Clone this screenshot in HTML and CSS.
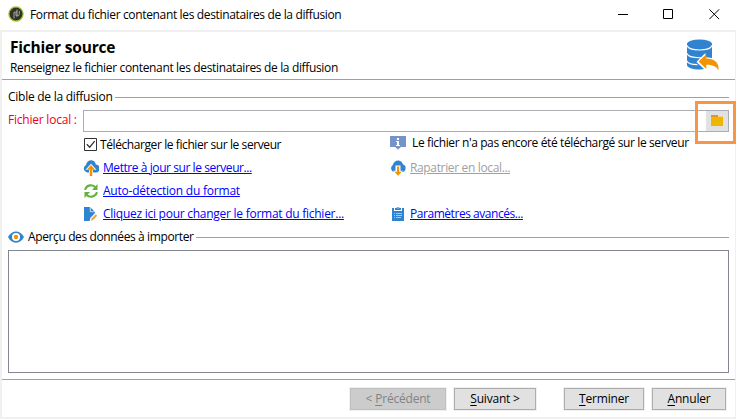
FILE: index.html
```html
<!DOCTYPE html>
<html lang="fr">
<head>
<meta charset="utf-8">
<title>Format du fichier</title>
<link rel="stylesheet" href="styles.css">
</head>
<body>
<div class="window">
  <header class="titlebar">
    <svg class="app-icon" width="16" height="16" viewBox="0 0 16 16"><circle cx="8" cy="8" r="7.100" fill="#30332a" stroke="#a5c32b" stroke-width="1.200"/><path d="M9 10.500V3.500M9 9.800H8V5.800h1M6 12.500V6.200h1.500M9 9.800c1.600 0 2.300-.6 2.300-2.200V5" fill="none" stroke="#a6a89c" stroke-width="1"/></svg>
    <span class="title">Format du fichier contenant les destinataires de la diffusion</span>
    <div class="controls">
      <svg width="11" height="11" viewBox="0 0 11 11"><path d="M1 5.500h10"/></svg>
      <svg width="11" height="11" viewBox="0 0 11 11"><path d="M.5.5h9v9h-9z"/></svg>
      <svg width="11" height="11" viewBox="0 0 11 11"><path d="M.4.4l9.700 9.700M10.100.4L.4 10.100"/></svg>
    </div>
  </header>
  <main class="client">
    <section class="heading">
      <div>
        <h1>Fichier source</h1>
        <p class="subtitle">Renseignez le fichier contenant les destinataires de la diffusion</p>
      </div>
      <svg class="db-icon" width="34" height="34" viewBox="0 0 34 34">
        <path d="M1 5v21c0 2.600 5.500 4.500 12.500 4.500 2 0 3.500-.1 4.500-.4L10.500 23l8-8v3l7.500 1V5z" fill="#3083d0"/>
        <ellipse cx="13.500" cy="5" rx="12.500" ry="4.500" fill="#3083d0"/>
        <path d="M1 6.500c1 3 6 4.500 12.500 4.500S25 9.500 26 6.500M1 14.500c1 3 6 4.200 12.500 4.200l3-.1M1 22c1 2.700 5.500 3.600 10.500 3.600" fill="none" stroke="#fff" stroke-width="1.100"/>
        <path d="M11 22.500l8.500-8.500v5c8 0 13 3.500 14 12l-14-3.500v2.500z" fill="#fff"/>
        <path d="M12.500 22.600l7.800-7.300v4.300c8 .3 12.700 3.600 12.400 11.700-2.400-4.200-6.300-5.500-12.400-5.600v4.300z" fill="#f29400"/>
      </svg>
    </section>
    <div class="group group-target"><span class="t-target">Cible de la diffusion</span></div>
    <div class="file-row">
      <label class="file-label" for="file">Fichier local :</label>
      <div class="file-field">
        <input id="file" type="text">
        <div class="browse">
          <svg width="12" height="11" viewBox="0 0 12 11"><path d="M0 0h7v2H0z" fill="#df942e"/><path d="M7 1h5v2H7z" fill="#f4cf8a"/><path d="M0 2h12v9H0z" fill="#efb600"/></svg>
          <div class="highlight"></div>
        </div>
      </div>
    </div>
    <div class="options">
      <div class="cell">
        <svg class="ic" width="16" height="16" viewBox="0 0 16 16"><path d="M1.500 1.500h12v12h-12z" fill="#fff" stroke="#333"/><path d="M3.800 7.300l2.900 2.900 5-6" fill="none" stroke="#333" stroke-width="1.300"/></svg>
        <span class="t-check">Télécharger le fichier sur le serveur</span>
      </div>
      <div class="cell info">
        <svg class="ic" width="16" height="16" viewBox="0 0 16 16"><path d="M0 1h16v11h-5l-3 2.500L5 12H0z" fill="#7694c5"/><path d="M7 3h2v2H7zM6 6h3v4h1v1H6v-1h1V7H6z" fill="#fff"/></svg>
        <span class="t-info">Le fichier n'a pas encore été téléchargé sur le serveur</span>
      </div>
      <div class="cell">
        <svg class="ic" width="16" height="16" viewBox="0 0 16 16"><path d="M4 12.500A4 4 0 0 1 3 5C3.500 1.800 6 0 8.500.2c2.500.2 4 2 4.300 4.200A4 4 0 0 1 12 12.500z" fill="#3083d0"/><path d="M8 3.800l5.500 6H10V16H6V9.800H2.500z" fill="#fff"/><path d="M8 5l4.200 4.700H9.300V16H6.700V9.700H3.800z" fill="#f29400"/></svg>
        <a class="t-update">Mettre à jour sur le serveur...</a>
      </div>
      <div class="cell">
        <svg class="ic" width="16" height="16" viewBox="0 0 16 16"><path d="M4 12A4 4 0 0 1 3 4.700C3.500 1.800 6 .2 8.500.4c2.500.2 4 1.800 4.300 3.800A4 4 0 0 1 12 12z" fill="#3083d0"/><path d="M5.500 5.500h5v5.200H13L8 16l-5-5.300h2.500z" fill="#fff"/><path d="M7 6.500h2.200v5.200h2.600L8.100 15.800 4.400 11.700H7z" fill="#f29400"/></svg>
        <a class="t-local disabled">Rapatrier en local...</a>
      </div>
      <div class="cell">
        <svg class="ic" width="16" height="16" viewBox="0 0 16 16"><path d="M2 6.800C3.800 1.300 10 1.200 12.500 4.400M14 9.200c-1.800 5.500-8 5.600-10.500 2.400" fill="none" stroke="#62b33a" stroke-width="2.100"/><path d="M14.500 1v6H9zM1.500 15V9H7z" fill="#62b33a"/></svg>
        <a class="t-auto">Auto-détection du format</a>
      </div>
      <div class="cell"></div>
      <div class="cell">
        <svg class="ic" width="16" height="16" viewBox="0 0 16 16"><path d="M1 1h6l5 5v2l-5 7H1z" fill="#3083d0"/><path d="M7.300 1v4.700H12" fill="none" stroke="#fff" stroke-width=".7"/><path d="M6.500 15.500l.8-3.500L12.500 6.500l2.800 2.800-5.300 5.400z" fill="#fff"/><path d="M8 14.700l.6-2.300 4-4.200 1.600 1.600-4.100 4.300z" fill="#f4a33a"/></svg>
        <a class="t-click">Cliquez ici pour changer le format du fichier...</a>
      </div>
      <div class="cell">
        <svg class="ic" width="16" height="16" viewBox="0 0 16 16"><path d="M2 2h12v13H2z" fill="#3083d0"/><path d="M2 1v1h2v3h8V2h2V1z" fill="#fff"/><path d="M5 4V2h1.500a1.600 1.600 0 0 1 3 0H11v2z" fill="#3083d0"/><path d="M7.500 1.500h1v1h-1z" fill="#fff"/><path d="M4 7.500h1M6 7.500h6M4 9.500h1M6 9.500h6M4 11.500h1M6 11.500h5" stroke="#d5e7f7" stroke-width=".7"/></svg>
        <a class="t-params">Paramètres avancés...</a>
      </div>
    </div>
    <div class="group group-preview">
      <svg width="16" height="12" viewBox="0 0 16 12"><path d="M0 6C3.500-1.500 12.500-1.500 16 6 12.500 13.500 3.500 13.500 0 6z" fill="#3083d0"/><circle cx="8" cy="6" r="4" fill="#fff"/><circle cx="8" cy="6" r="2.200" fill="#f29400"/></svg>
      <span class="t-preview">Aperçu des données à importer</span>
    </div>
    <div class="preview"></div>
    <footer class="footer">
      <button class="btn prev" disabled>&lt; <u>P</u>récédent</button>
      <button class="btn next"><u>S</u>uivant &gt;</button>
      <button class="btn finish"><u>T</u>erminer</button>
      <button class="btn cancel"><u>A</u>nnuler</button>
    </footer>
  </main>
</div>
</body>
</html>
```
FILE: styles.css
```css
* { box-sizing: border-box; }

body {
  margin: 0;
  background: #fff;
  color: #000;
  font: 12px/16px "Open Sans", "Noto Sans", sans-serif;
  letter-spacing: -0.35px;
  overflow: hidden;
}

.window { width: 736px; height: 419px; display: flex; flex-direction: column; }

.titlebar { display: flex; align-items: center; height: 30px; padding: 0 16px 2px 8px; }
.title { padding-top: 2px; }
.app-icon { margin-right: 6px; }
.controls { display: flex; gap: 35px; margin-left: auto; }
.controls svg { fill: none; stroke: #000; stroke-width: 1; }

.client {
  flex: 1;
  display: flex;
  flex-direction: column;
  border: 2px solid #f0f0f0;
  border-right-width: 1px;
}

.heading {
  display: flex;
  justify-content: space-between;
  height: 48px;
  padding: 5px 15px 0 8px;
  border-bottom: 1px solid #a0a0a0;
}
h1 { margin: 0; font-size: 15.5px; line-height: 20px; font-weight: 700; letter-spacing: -0.2px; }
.subtitle { margin: 3px 0 0; }
.db-icon { margin-top: 2px; }

.group { display: flex; align-items: center; height: 16px; padding: 0 6px; white-space: nowrap; }
.group::after { content: ""; flex: 1; height: 1px; margin-left: 2px; background: #a0a0a0; }
.group svg { margin-right: 4px; }
.group-target { margin-top: 9px; }
.t-target { letter-spacing: -0.26px; }
.t-preview { letter-spacing: -0.38px; }

.file-row { display: flex; align-items: center; height: 22px; margin-top: 5px; padding: 0 6px; }
.file-label { width: 75px; padding-bottom: 2px; color: #f00010; white-space: nowrap; letter-spacing: -0.22px; }
.file-field { display: flex; flex: 1; height: 22px; border: 1px solid #abadb3; }
.file-field input { flex: 1; min-width: 0; border: 0; padding: 0 4px; font: inherit; outline: 0; }
.browse { position: relative; display: flex; width: 22px; align-items: center; justify-content: center; background: #e1e1e1; }
.browse svg { margin: 0 1px 1px 0; }
.highlight { position: absolute; left: -11px; top: -10px; width: 41px; height: 43px; border: 3px solid #f79646; }

.options {
  display: grid;
  grid-template-columns: 307px 1fr;
  grid-auto-rows: 23px;
  margin-top: 1px;
  padding-left: 81px;
}
.cell { display: flex; align-items: center; white-space: nowrap; }
.cell .ic { margin-right: 4px; }
.t-check { margin-left: -3px; letter-spacing: -0.41px; }
.info { padding-bottom: 4px; }
.info .ic { margin-right: 6px; }
.t-info { letter-spacing: -0.38px; }
.t-update { letter-spacing: -0.43px; }
.t-auto { letter-spacing: -0.22px; }
.t-click { letter-spacing: -0.26px; }
.t-params { letter-spacing: -0.45px; }
.cell a { color: #0000ff; text-decoration: underline; }
.cell a.disabled { color: #a0a0a0; }

.group-preview { margin-top: 4px; }
.preview { height: 123px; margin: 5px 6px 0; border: 1px solid #828790; }

.footer {
  display: flex;
  height: 38px;
  margin-top: 6px;
  padding: 8px 9px 0 0;
  justify-content: flex-end;
  border-top: 1px solid #a0a0a0;
}
.btn {
  height: 22px;
  padding: 0 0 1px;
  border: 1px solid #adadad;
  background: #e1e1e1;
  box-shadow: 0 0 0 1px #f0f0f0;
  color: #000;
  font: inherit;
  letter-spacing: -0.2px;
}
.btn u { text-underline-offset: 2px; }
.prev { width: 96px; margin-right: 8px; background: #ccc; border-color: #bfbfbf; color: #838383; }
.next { width: 82px; margin-right: 28px; }
.finish { width: 80px; margin-right: 8px; }
.cancel { width: 74px; }
```
